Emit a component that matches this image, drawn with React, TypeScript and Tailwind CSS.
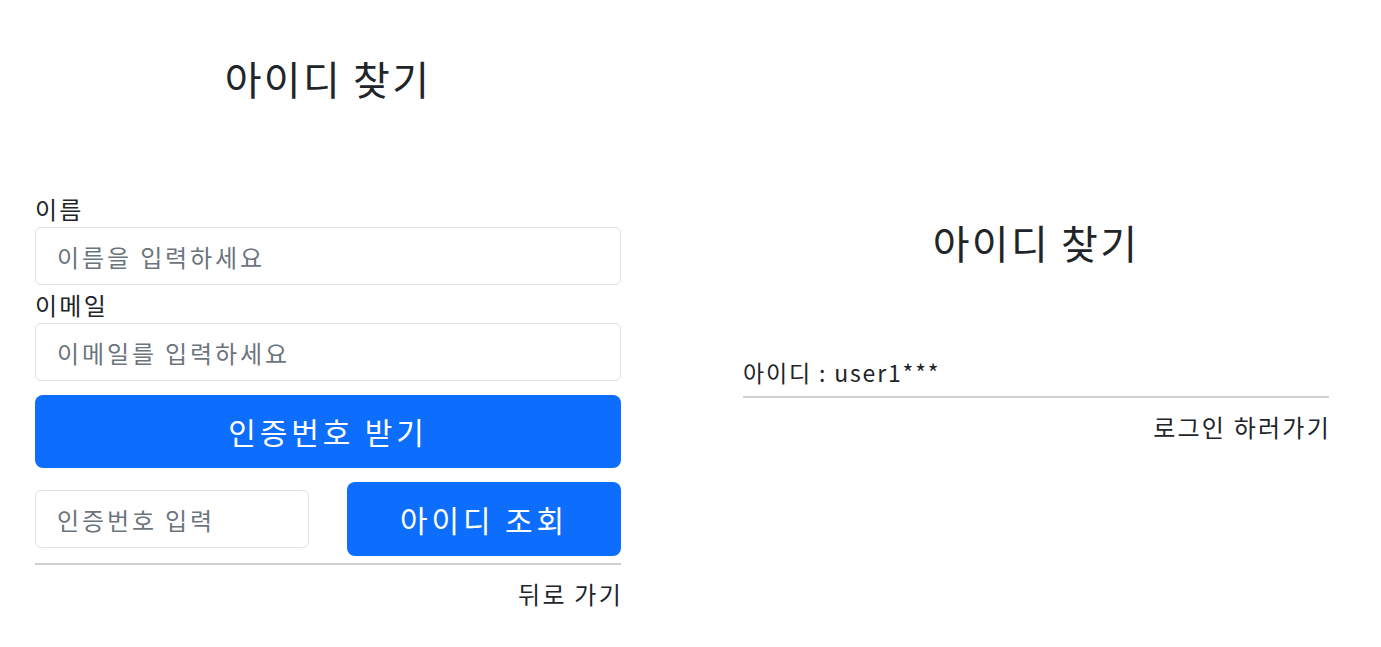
const font = { fontFamily: '"Noto Sans CJK KR", "Noto Sans", sans-serif' };

const App = () => {
  return (
    <div className="min-h-screen bg-white text-[#212529] tracking-[0.14em]" style={font}>
      <div className="flex items-start px-[35px] gap-[122px]">

        {/* Find ID form */}
        <div className="w-[586px] flex flex-col pt-[48px]">
          <h2 className="text-[40px] leading-[60px] text-center font-normal">아이디 찾기</h2>

          <label className="mt-[83px] text-[24px] leading-[36px]">이름</label>
          <input
            className="h-[58px] w-full border border-[#dee2e6] rounded-[6px] px-[21px] text-[24px] tracking-[0.12em] placeholder:text-[#6c757d] outline-none"
            placeholder="이름을 입력하세요"
          />

          <label className="mt-[2px] text-[24px] leading-[36px]">이메일</label>
          <input
            className="h-[58px] w-full border border-[#dee2e6] rounded-[6px] px-[21px] text-[24px] tracking-[0.12em] placeholder:text-[#6c757d] outline-none"
            placeholder="이메일를 입력하세요"
          />

          <button className="mt-[14px] h-[73px] w-full bg-[#0d6efd] text-white rounded-[8px] text-[30px] leading-[45px] tracking-[0.13em]">
            인증번호 받기
          </button>

          <div className="mt-[14px] flex items-center justify-between">
            <input
              className="h-[58px] w-[274px] border border-[#dee2e6] rounded-[6px] px-[21px] text-[24px] tracking-[0.12em] placeholder:text-[#6c757d] outline-none"
              placeholder="인증번호 입력"
            />
            <button className="h-[74px] w-[274px] bg-[#0d6efd] text-white rounded-[8px] text-[30px] leading-[45px] tracking-[0.13em]">
              아이디 조회
            </button>
          </div>

          <div className="mt-[7px] h-[2px] bg-[#cfd0d1]" />
          <div className="mt-[11px] text-right text-[24px] leading-[36px] -mr-[2px]">뒤로 가기</div>
        </div>

        {/* Result */}
        <div className="w-[586px] flex flex-col pt-[212px]">
          <h2 className="text-[40px] leading-[60px] text-center font-normal">아이디 찾기</h2>
          <div className="mt-[82px] text-[23px] leading-[36px] tracking-[0.08em]">아이디 : user1***</div>
          <div className="mt-[6px] h-[2px] bg-[#cfd0d1]" />
          <div className="mt-[11px] text-right text-[24px] leading-[36px] -mr-[2px]">로그인 하러가기</div>
        </div>
      </div>
    </div>
  );
};

export default App;
